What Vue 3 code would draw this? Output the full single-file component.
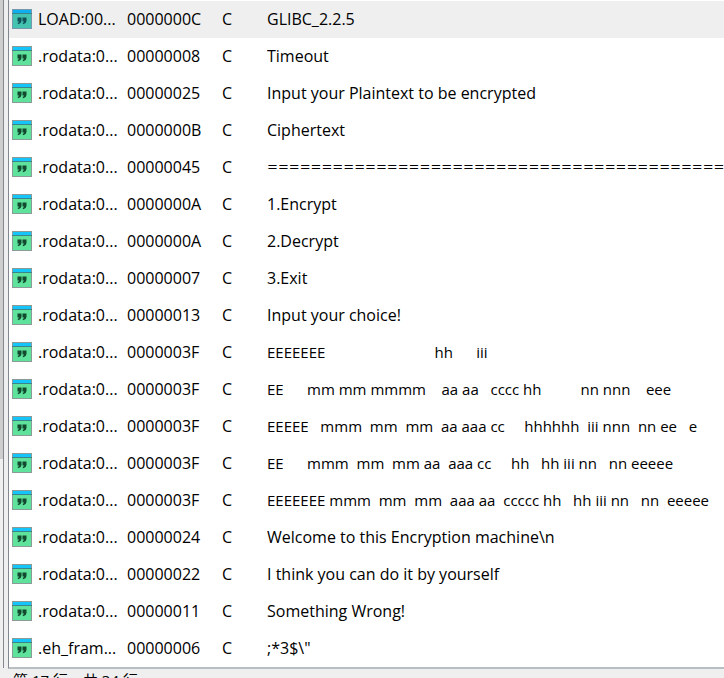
<template>
  <div class="window">
    <div class="side">
      <div class="side-thumb"></div>
      <div class="side-rest"></div>
    </div>
    <div class="splitter"></div>
    <main class="panel">
      <div class="list">
        <table class="strings">
          <colgroup>
            <col class="col-address" />
            <col class="col-length" />
            <col class="col-type" />
            <col />
          </colgroup>
          <tbody>
            <tr v-for="(row, index) in rows" :key="index" :class="{ selected: index === selectedIndex }" @click="selectedIndex = index">
              <td>
                <div class="address">
                  <svg class="icon" viewBox="0 0 20 20">
                    <rect class="icon-body" x="0.5" y="0.5" width="19" height="19" />
                    <rect class="icon-bar" x="1" y="1" width="18" height="3" />
                    <path class="icon-line" d="M0 4.5h20" />
                    <path class="icon-quote" d="M5.500 8.500h4v3.500q-.2 2.600-3.200 3.300l-.8-1.300q1.300-.4 1.500-1.500h-1.500zM10.500 8.500h4v3.500q-.2 2.600-3.200 3.300l-.8-1.300q1.300-.4 1.500-1.500h-1.500z" />
                  </svg>
                  <span>{{ row.address }}</span>
                </div>
              </td>
              <td>{{ row.length }}</td>
              <td>C</td>
              <td :class="row.style">{{ row.text }}</td>
            </tr>
          </tbody>
        </table>
      </div>
      <footer class="status">第 17 行，共 34 行</footer>
    </main>
  </div>
</template>

<script setup>
import { ref } from "vue";

const selectedIndex = ref(0);

const rows = [
  { address: "LOAD:00...", length: "0000000C", text: "GLIBC_2.2.5" },
  { address: ".rodata:0...", length: "00000008", text: "Timeout" },
  { address: ".rodata:0...", length: "00000025", text: "Input your Plaintext to be encrypted" },
  { address: ".rodata:0...", length: "0000000B", text: "Ciphertext" },
  { address: ".rodata:0...", length: "00000045", text: "=".repeat(68), style: "rule" },
  { address: ".rodata:0...", length: "0000000A", text: "1.Encrypt" },
  { address: ".rodata:0...", length: "0000000A", text: "2.Decrypt" },
  { address: ".rodata:0...", length: "00000007", text: "3.Exit" },
  { address: ".rodata:0...", length: "00000013", text: "Input your choice!" },
  { address: ".rodata:0...", length: "0000003F", text: "EEEEEEE                            hh      iii", style: "banner" },
  { address: ".rodata:0...", length: "0000003F", text: "EE      mm mm mmmm    aa aa   cccc hh          nn nnn    eee", style: "banner" },
  { address: ".rodata:0...", length: "0000003F", text: "EEEEE   mmm  mm  mm  aa aaa cc     hhhhhh  iii nnn  nn ee   e", style: "banner" },
  { address: ".rodata:0...", length: "0000003F", text: "EE      mmm  mm  mm aa  aaa cc     hh   hh iii nn   nn eeeee", style: "banner" },
  { address: ".rodata:0...", length: "0000003F", text: "EEEEEEE mmm  mm  mm  aaa aa  ccccc hh   hh iii nn   nn  eeeee", style: "banner" },
  { address: ".rodata:0...", length: "00000024", text: "Welcome to this Encryption machine\\n" },
  { address: ".rodata:0...", length: "00000022", text: "I think you can do it by yourself" },
  { address: ".rodata:0...", length: "00000011", text: "Something Wrong!" },
  { address: ".eh_fram...", length: "00000006", text: ";*3$\\\"" },
];
</script>

<style>
body {
  margin: 0;
  overflow: hidden;
}
</style>

<style scoped>
.window {
  display: flex;
  height: 100vh;
  overflow: hidden;
  background: #efefef;
  color: #000;
  font-family: "Open Sans", "Noto Sans CJK SC", sans-serif;
  font-size: 16px;
}

/* Edge of the neighbouring panel */
.side {
  display: flex;
  flex-direction: column;
  flex: none;
  width: 3px;
  margin-bottom: 10px;
  border-right: 1px solid #828790;
}

.side-thumb {
  flex: 459;
  background: #cdcdcd;
}

.side-rest {
  flex: 209;
  background: #f0f0f0;
}

.splitter {
  flex: none;
  width: 4px;
}

.panel {
  flex: 1;
  min-width: 0;
}

.list {
  overflow: hidden;
  padding-top: 1px;
  background: #fff;
  border-left: 1px solid #828790;
  border-bottom: 2px solid #b9bec2;
}

.strings {
  width: 100%;
  table-layout: fixed;
  border-collapse: collapse;
}

.col-address {
  width: 118px;
}

.col-length {
  width: 95px;
}

.col-type {
  width: 45px;
}

td {
  height: 37px;
  padding: 0;
  line-height: 36px;
  vertical-align: top;
  white-space: pre;
  overflow: hidden;
}

.selected {
  background: #efefef;
}

.address {
  display: flex;
  align-items: center;
  gap: 6px;
  padding-left: 3px;
}

.icon {
  flex: none;
  width: 20px;
  height: 20px;
}

.icon-body {
  fill: #5fe39c;
  stroke: #8b9b98;
}

.icon-bar {
  fill: #15c5fa;
}

.icon-line {
  stroke: #3b8487;
}

.icon-quote {
  fill: #12492f;
}

.selected .icon-body {
  fill: #43c3b0;
  stroke: #7799ae;
}

.selected .icon-bar {
  fill: #0fafef;
}

.selected .icon-quote {
  fill: #12505a;
}

.rule {
  font-family: "DejaVu Sans", sans-serif;
  font-size: 13px;
}

.banner {
  font-size: 15px;
}

.status {
  padding-left: 5px;
  font-size: 15px;
  line-height: 22px;
  white-space: nowrap;
}
</style>
